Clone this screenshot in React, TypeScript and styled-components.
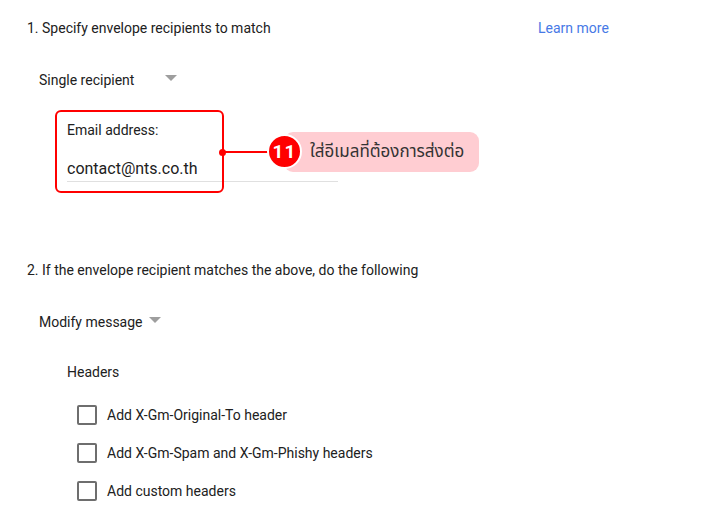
import React from "react";
import styled, { createGlobalStyle } from "styled-components";

const Global = createGlobalStyle`
  html, body { margin: 0; padding: 0; background: #fff; }
  body { font-family: Roboto, "Noto Sans", Arial, sans-serif; color: #212121; font-size: 14px; }
`;

const Page = styled.div`
  width: 720px;
  height: 519px;
  overflow: hidden;
  padding: 18px 0 0 27px;
  box-sizing: border-box;
  position: relative;
`;

const TitleRow = styled.div`
  display: grid;
  grid-template-columns: 511px auto;
  line-height: 20px;
  font-size: 14px;
`;

const Title = styled.div<{ $top?: number }>`
  line-height: 20px;
  font-size: 14px;
  margin-top: ${(p) => p.$top ?? 0}px;
`;

const Link = styled.a`
  color: #4779e6;
  text-decoration: none;
  font-size: 14px;
`;

const Dropdown = styled.div<{ $width?: number; $top: number }>`
  display: flex;
  align-items: center;
  justify-content: space-between;
  gap: 6px;
  margin: ${(p) => p.$top}px 0 0 12px;
  width: ${(p) => (p.$width ? `${p.$width}px` : "max-content")};
  line-height: 20px;
  font-size: 14px;
`;

const Arrow = styled.span`
  width: 0;
  height: 0;
  border-left: 6px solid transparent;
  border-right: 6px solid transparent;
  border-top: 6px solid #9e9e9e;
  margin-top: -4px;
`;

const Field = styled.div`
  position: relative;
  margin: 30px 0 0 40px;
  width: 271px;
`;

const FieldLabel = styled.div`
  line-height: 20px;
  font-size: 14px;
`;

const FieldValue = styled.div`
  margin-top: 17px;
  line-height: 24px;
  font-size: 16px;
  border-bottom: 1px solid #e0e0e0;
`;

const Highlight = styled.div`
  position: absolute;
  left: -12px;
  top: -10px;
  width: 169px;
  height: 83px;
  box-sizing: border-box;
  border: 2px solid #f00;
  border-radius: 6px;
`;

const Dot = styled.div`
  position: absolute;
  left: 152px;
  top: 29px;
  width: 7px;
  height: 7px;
  border-radius: 50%;
  background: #f00;
`;

const Line = styled.div`
  position: absolute;
  left: 156px;
  top: 31px;
  width: 48px;
  height: 2px;
  background: #f00;
`;

const Callout = styled.div`
  position: absolute;
  left: 200px;
  top: 12px;
  display: flex;
  align-items: center;
`;

const Badge = styled.div`
  position: relative;
  z-index: 1;
  width: 31px;
  height: 31px;
  margin-top: -2px;
  border-radius: 50%;
  background: #f00;
  border: 2px solid #fff;
  color: #fff;
  font-weight: 700;
  font-size: 19px;
  letter-spacing: 1px;
  display: flex;
  align-items: center;
  justify-content: center;
  font-family: Roboto, Arial, sans-serif;
`;

const Pill = styled.div`
  margin-left: -18px;
  height: 40px;
  width: 195px;
  box-sizing: border-box;
  padding-left: 26px;
  background: #ffcdd2;
  border-radius: 9px;
  display: flex;
  align-items: center;
  color: #333;
  font-size: 17px;
  font-family: "Noto Sans Thai", Tahoma, "DejaVu Sans", "Noto Sans", sans-serif;
`;

const SubHeading = styled.div`
  margin: 30px 0 0 40px;
  line-height: 20px;
  font-size: 14px;
`;

const CheckList = styled.div`
  margin: 14px 0 0 50px;
  display: flex;
  flex-direction: column;
`;

const CheckRow = styled.label`
  display: flex;
  align-items: center;
  gap: 10px;
  height: 38px;
  font-size: 14px;
`;

const Box = styled.span`
  width: 20px;
  height: 20px;
  box-sizing: border-box;
  border: 2px solid #6e6e6e;
  border-radius: 2px;
  flex: none;
`;

export default function App() {
  return (
    <>
      <Global />
      <Page>
        <TitleRow>
          <span>1. Specify envelope recipients to match</span>
          <Link href="#">Learn more</Link>
        </TitleRow>
        <Dropdown $width={138} $top={32}>
          <span>Single recipient</span>
          <Arrow />
        </Dropdown>
        <Field>
          <FieldLabel>Email address:</FieldLabel>
          <FieldValue>contact@nts.co.th</FieldValue>
          <Highlight />
          <Line />
          <Dot />
          <Callout>
            <Badge>11</Badge>
            <Pill>ใส่อีเมลที่ต้องการส่งต่อ</Pill>
          </Callout>
        </Field>
        <Title $top={78}>2. If the envelope recipient matches the above, do the following</Title>
        <Dropdown $top={32}>
          <span>Modify message</span>
          <Arrow />
        </Dropdown>
        <SubHeading>Headers</SubHeading>
        <CheckList>
          <CheckRow><Box />Add X-Gm-Original-To header</CheckRow>
          <CheckRow><Box />Add X-Gm-Spam and X-Gm-Phishy headers</CheckRow>
          <CheckRow><Box />Add custom headers</CheckRow>
        </CheckList>
      </Page>
    </>
  );
}
